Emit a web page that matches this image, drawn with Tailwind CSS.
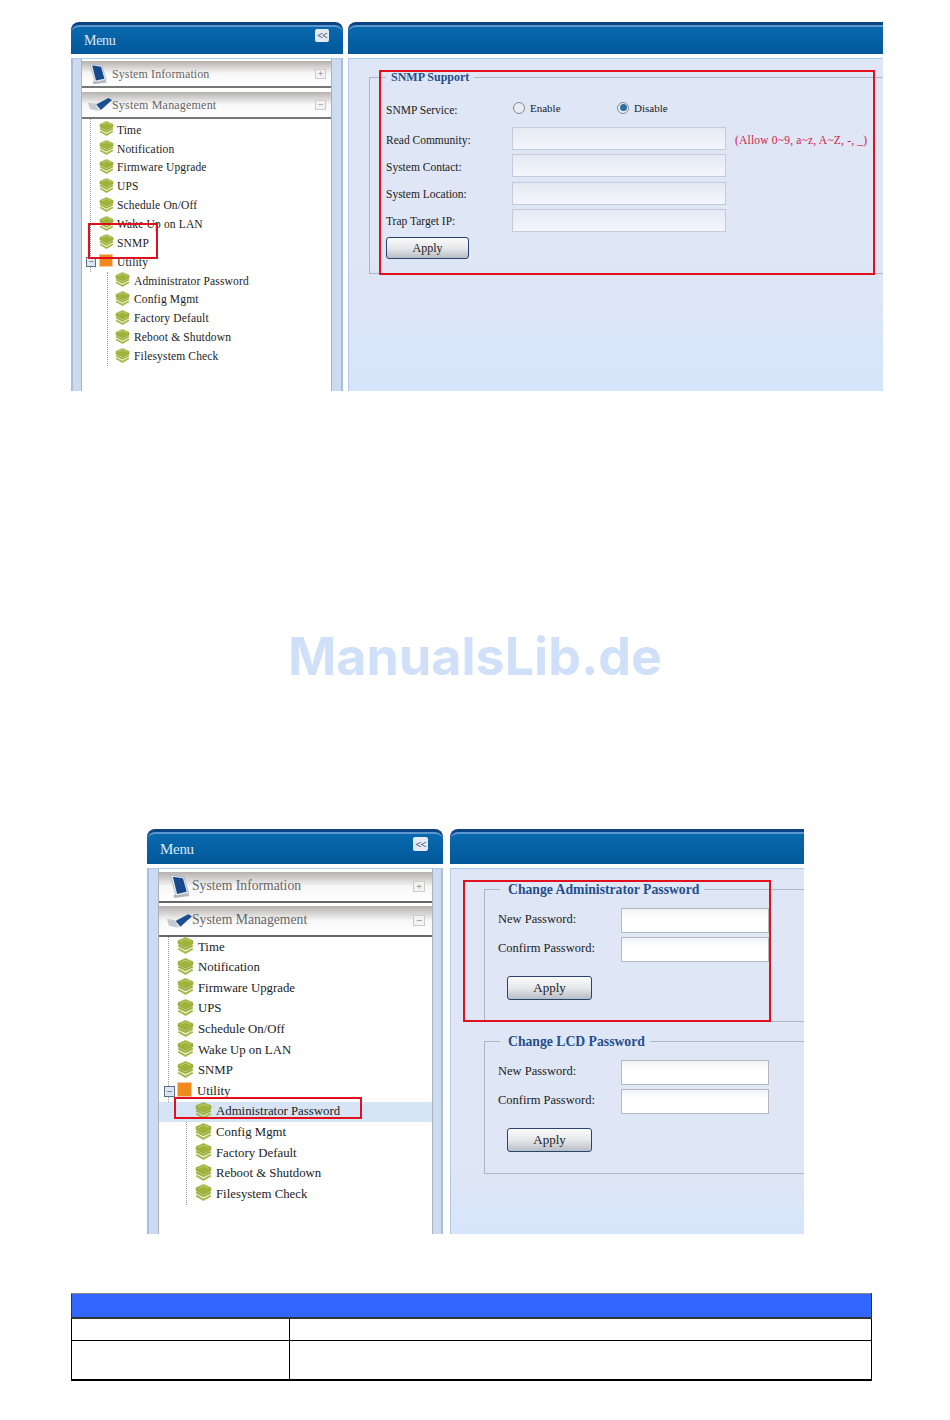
<!doctype html>
<html>
  <head>
    <meta charset="utf-8" />
    <title>SNMP and password settings</title>
    <script src="https://cdn.jsdelivr.net/npm/@tailwindcss/browser@4"></script>
  </head>
  <body class="bg-white font-['Liberation_Serif',serif] text-[#222]">
    <svg class="hidden">
      <symbol id="stack" viewBox="0 0 16 16">
        <path d="M8 .4 15 3.600v2.800L8 9.800 1 6.400V3.600z" fill="#9fb23a" stroke="#869c2c" stroke-width=".5" />
        <path d="M3 4.200 8 1.900l5 2.300" fill="none" stroke="#c3d06e" stroke-width=".9" />
        <path d="M1.200 8 8 11.500 14.800 8" fill="none" stroke="#9fb23a" stroke-width="1.900" />
        <path d="M1.200 11 8 14.800 14.800 11" fill="none" stroke="#a9ba4c" stroke-width="1.900" />
      </symbol>
      <symbol id="tablet" viewBox="0 0 24 26">
        <path d="M6 25 5 22 20 20 22 23z" fill="#b4b9bf" />
        <path d="M2 1 16 3 21 20 8 23z" fill="#e9edf2" stroke="#9aa3ad" stroke-width=".7" />
        <path d="M4.500 2.800 15 4.500 19 18.500 9 20.800z" fill="#17498c" />
      </symbol>
      <symbol id="drive" viewBox="0 0 26 16">
        <path d="M0 6 8 7 12 15 2 13z" fill="#c4cad1" />
        <path d="M8 7 13 5 16 11 12 15z" fill="#dfe3e7" />
        <path d="M9 8 22 1 26 3 14 14z" fill="#1c4f91" />
      </symbol>
    </svg>

    <!-- first screenshot: SNMP -->
    <section class="relative ml-[71px] flex h-[369px] w-[812px] gap-[5px] pt-[22px] box-content -mb-[22px]">
      <div class="flex h-[369px] w-[272px] flex-col">
        <div class="rounded-t-[8px] bg-[#0c4383] pt-[3px]">
          <div class="flex h-[29px] items-center justify-between rounded-t-[8px] border-t-2 border-[#5c98cf] bg-[linear-gradient(#0a69ae,#00589a)] pl-[13px] pr-[14px]">
            <span class="text-[14px] tracking-[-0.3px] text-[#dbeaf7]">Menu</span>
            <span class="mb-[10px] flex h-[13px] w-[14px] items-center justify-center rounded-[2px] bg-[#e4ebf2] text-[10px] font-bold leading-none tracking-[-1px] text-[#35506b]">&lt;&lt;</span>
          </div>
        </div>
        <div class="mt-[4px] flex-1 border-x-2 border-t border-x-[#a9bedb] border-t-[#a8cdf0] bg-[#cddbf1] pl-[8px] pr-[9px]">
          <div class="h-full border-x border-[#a7b2c2] bg-white pt-[2px]">
            <div class="flex h-[27px] items-center border-b-2 border-[#777] bg-[linear-gradient(#b5b1af,#f7f7f7_50%,#fff)]">
              <svg class="ml-[6px] h-[22px] w-[21px]"><use href="#tablet" /></svg>
              <span class="ml-[3px] text-[12px] tracking-[0.1px] text-[#666]">System Information</span>
              <span class="ml-auto mr-[5px] flex h-[10px] w-[11px] items-center justify-center border border-[#ccc] bg-[#f2f2f2] text-[10px] leading-none text-[#777]">+</span>
            </div>
            <div class="mt-[4px] flex h-[27px] items-center border-b-2 border-[#777] bg-[linear-gradient(#b5b1af,#f7f7f7_50%,#fff)]">
              <svg class="ml-[6px] h-[15px] w-[24px]"><use href="#drive" /></svg>
              <span class="text-[12px] tracking-[0.2px] text-[#666]">System Management</span>
              <span class="ml-auto mr-[5px] flex h-[10px] w-[11px] items-center justify-center border border-[#ccc] bg-[#f2f2f2] text-[10px] leading-none text-[#777]">−</span>
            </div>
            <div class="text-[11.500px] tracking-[0.15px]">
              <div class="ml-[8px] border-l border-dotted border-[#999] pt-[2px]">
                <div class="flex h-[18.850px] items-center gap-[3px] pl-[8px]"><svg class="mb-[3px] h-[15px] w-[15px]"><use href="#stack" /></svg>Time</div>
                <div class="flex h-[18.850px] items-center gap-[3px] pl-[8px]"><svg class="mb-[3px] h-[15px] w-[15px]"><use href="#stack" /></svg>Notification</div>
                <div class="flex h-[18.850px] items-center gap-[3px] pl-[8px]"><svg class="mb-[3px] h-[15px] w-[15px]"><use href="#stack" /></svg>Firmware Upgrade</div>
                <div class="flex h-[18.850px] items-center gap-[3px] pl-[8px]"><svg class="mb-[3px] h-[15px] w-[15px]"><use href="#stack" /></svg>UPS</div>
                <div class="flex h-[18.850px] items-center gap-[3px] pl-[8px]"><svg class="mb-[3px] h-[15px] w-[15px]"><use href="#stack" /></svg>Schedule On/Off</div>
                <div class="flex h-[18.850px] items-center gap-[3px] pl-[8px]"><svg class="mb-[3px] h-[15px] w-[15px]"><use href="#stack" /></svg>Wake Up on LAN</div>
                <div class="flex h-[18.850px] items-center gap-[3px] pl-[8px]"><svg class="mb-[3px] h-[15px] w-[15px]"><use href="#stack" /></svg>SNMP</div>
                <div class="relative flex h-[18.850px] items-center gap-[4px] pl-[8px]">
                  <span class="absolute left-[-5px] top-[4px] flex h-[10px] w-[10px] items-center justify-center border border-[#5a6f88] bg-[#dde6f0] text-[9px] leading-none">−</span>
                  <span class="mb-[3px] h-[13px] w-[14px] border border-[#f3c9a6] bg-[#f08a1d]"></span>Utility
                </div>
              </div>
              <div class="ml-[25px] border-l border-dotted border-[#999]">
                <div class="flex h-[18.850px] items-center gap-[4px] pl-[7px]"><svg class="mb-[3px] h-[15px] w-[15px]"><use href="#stack" /></svg>Administrator Password</div>
                <div class="flex h-[18.850px] items-center gap-[4px] pl-[7px]"><svg class="mb-[3px] h-[15px] w-[15px]"><use href="#stack" /></svg>Config Mgmt</div>
                <div class="flex h-[18.850px] items-center gap-[4px] pl-[7px]"><svg class="mb-[3px] h-[15px] w-[15px]"><use href="#stack" /></svg>Factory Default</div>
                <div class="flex h-[18.850px] items-center gap-[4px] pl-[7px]"><svg class="mb-[3px] h-[15px] w-[15px]"><use href="#stack" /></svg>Reboot &amp; Shutdown</div>
                <div class="flex h-[18.850px] items-center gap-[4px] pl-[7px]"><svg class="mb-[3px] h-[15px] w-[15px]"><use href="#stack" /></svg>Filesystem Check</div>
              </div>
            </div>
          </div>
        </div>
      </div>

      <div class="flex h-[369px] flex-1 flex-col overflow-hidden">
        <div class="rounded-tl-[8px] bg-[#0c4383] pt-[3px]">
          <div class="h-[29px] rounded-tl-[8px] border-t-2 border-[#5c98cf] bg-[linear-gradient(#0a69ae,#00589a)]"></div>
        </div>
        <div class="mt-[4px] flex-1 border-l border-t border-l-[#b4c8e4] border-t-[#a8cdf0] bg-[linear-gradient(#dfe6f5,#dfe6f5_60%,#d6e5fb)] pl-[20px] pt-[11px] text-[11.500px]">
          <fieldset class="border border-r-0 border-[#a9b7cc] pb-[14px] pl-[16px]">
            <legend class="pl-[5px] pr-[5px] text-[12px] font-bold leading-[14px] text-[#23508f]">SNMP Support</legend>
            <div class="mt-[12px] flex h-[27px] items-center">
              <span class="w-[126px] pt-[3px]">SNMP Service:</span>
              <span class="-mt-[4px] ml-[1px] h-[12px] w-[12px] rounded-full border border-[#888] bg-[#e8edf3]"></span>
              <span class="-mt-[2px] ml-[5px] w-[87px] text-[11px]">Enable</span>
              <span class="-mt-[4px] flex h-[12px] w-[12px] items-center justify-center rounded-full border border-[#7f8a98] bg-[#e8edf3]"><span class="h-[7px] w-[7px] rounded-full bg-[#2d6d9f]"></span></span>
              <span class="-mt-[2px] ml-[5px] text-[11px]">Disable</span>
            </div>
            <div class="mt-[4px] flex flex-col gap-[4.300px]">
              <div class="flex items-center"><label class="w-[126px] pt-[4px]">Read Community:</label><input class="h-[23px] w-[214px] border border-[#c3cbd8] bg-[linear-gradient(#e4eaf4,#f3f6fb)]" /><span class="ml-[9px] whitespace-nowrap pt-[4px] tracking-[0.2px] text-[#d3224a]">(Allow 0~9, a~z, A~Z, -, _)</span></div>
              <div class="flex items-center"><label class="w-[126px] pt-[4px]">System Contact:</label><input class="h-[23px] w-[214px] border border-[#c3cbd8] bg-[linear-gradient(#e4eaf4,#f3f6fb)]" /></div>
              <div class="flex items-center"><label class="w-[126px] pt-[4px]">System Location:</label><input class="h-[23px] w-[214px] border border-[#c3cbd8] bg-[linear-gradient(#e4eaf4,#f3f6fb)]" /></div>
              <div class="flex items-center"><label class="w-[126px] pt-[2px]">Trap Target IP:</label><input class="h-[23px] w-[214px] border border-[#c3cbd8] bg-[linear-gradient(#e4eaf4,#f3f6fb)]" /></div>
            </div>
            <button class="mt-[5px] block h-[22px] w-[83px] rounded-[3px] border border-[#27456b] bg-[linear-gradient(#fafafa,#e6e8ea_50%,#b9bec5)] text-[12px]">Apply</button>
          </fieldset>
        </div>
      </div>

      <div class="absolute left-[17px] top-[223px] h-[36px] w-[70px] border-2 border-[#e0101c]"></div>
      <div class="absolute left-[308px] top-[70px] h-[205px] w-[496px] border-2 border-[#e0101c]"></div>
    </section>

    <div class="mt-[258px] text-center font-['Inter',sans-serif] text-[52px] font-bold leading-[60px] text-[#cfe0f8]">ManualsLib.de</div>

    <!-- second screenshot: password -->
    <section class="relative ml-[147px] mt-[142px] flex h-[405px] w-[657px] gap-[7px]">
      <div class="flex w-[296px] flex-col">
        <div class="rounded-t-[8px] bg-[#0c4383] pt-[3px]">
          <div class="flex h-[32px] items-center justify-between rounded-t-[8px] border-t-2 border-[#5c98cf] bg-[linear-gradient(#0a69ae,#00589a)] pl-[13px] pr-[15px]">
            <span class="text-[15px] tracking-[-0.3px] text-[#dbeaf7]">Menu</span>
            <span class="mb-[10px] flex h-[14px] w-[15px] items-center justify-center rounded-[2px] bg-[#e4ebf2] text-[11px] font-bold leading-none tracking-[-1px] text-[#35506b]">&lt;&lt;</span>
          </div>
        </div>
        <div class="mt-[4px] flex-1 border-x-2 border-t border-x-[#a9bedb] border-t-[#a8cdf0] bg-[#cddbf1] pl-[9px] pr-[8px]">
          <div class="h-full border-x border-[#a7b2c2] bg-white pt-[3px]">
            <div class="flex h-[31px] items-center border-b-2 border-[#666] bg-[linear-gradient(#b5b1af,#f7f7f7_50%,#fff)]">
              <svg class="ml-[9px] h-[25px] w-[24px]"><use href="#tablet" /></svg>
              <span class="text-[13.700px] text-[#666]">System Information</span>
              <span class="ml-auto mr-[7px] flex h-[11px] w-[12px] items-center justify-center border border-[#ccc] bg-[#f2f2f2] text-[11px] leading-none text-[#777]">+</span>
            </div>
            <div class="mt-[3px] flex h-[31px] items-center border-b-2 border-[#666] bg-[linear-gradient(#b5b1af,#f7f7f7_50%,#fff)]">
              <svg class="ml-[8px] h-[16px] w-[25px]"><use href="#drive" /></svg>
              <span class="text-[13.700px] text-[#666]">System Management</span>
              <span class="ml-auto mr-[7px] flex h-[11px] w-[12px] items-center justify-center border border-[#ccc] bg-[#f2f2f2] text-[11px] leading-none text-[#777]">−</span>
            </div>
            <div class="text-[12.800px]">
              <div class="ml-[9px] border-l border-dotted border-[#999]">
                <div class="flex h-[20.600px] items-center gap-[4px] pl-[8px]"><svg class="mb-[3px] h-[17px] w-[17px]"><use href="#stack" /></svg>Time</div>
                <div class="flex h-[20.600px] items-center gap-[4px] pl-[8px]"><svg class="mb-[3px] h-[17px] w-[17px]"><use href="#stack" /></svg>Notification</div>
                <div class="flex h-[20.600px] items-center gap-[4px] pl-[8px]"><svg class="mb-[3px] h-[17px] w-[17px]"><use href="#stack" /></svg>Firmware Upgrade</div>
                <div class="flex h-[20.600px] items-center gap-[4px] pl-[8px]"><svg class="mb-[3px] h-[17px] w-[17px]"><use href="#stack" /></svg>UPS</div>
                <div class="flex h-[20.600px] items-center gap-[4px] pl-[8px]"><svg class="mb-[3px] h-[17px] w-[17px]"><use href="#stack" /></svg>Schedule On/Off</div>
                <div class="flex h-[20.600px] items-center gap-[4px] pl-[8px]"><svg class="mb-[3px] h-[17px] w-[17px]"><use href="#stack" /></svg>Wake Up on LAN</div>
                <div class="flex h-[20.600px] items-center gap-[4px] pl-[8px]"><svg class="mb-[3px] h-[17px] w-[17px]"><use href="#stack" /></svg>SNMP</div>
                <div class="relative flex h-[20.600px] items-center gap-[5px] pl-[8px]">
                  <span class="absolute left-[-5px] top-[5px] flex h-[11px] w-[11px] items-center justify-center border border-[#5a6f88] bg-[#dde6f0] text-[10px] leading-none">−</span>
                  <span class="mb-[3px] h-[15px] w-[15px] border border-[#f3c9a6] bg-[#f08a1d]"></span>Utility
                </div>
              </div>
              <div class="flex h-[20.600px] items-center gap-[4px] bg-[#d6e4f6] pl-[36px]"><svg class="mb-[3px] h-[17px] w-[17px]"><use href="#stack" /></svg>Administrator Password</div>
              <div class="ml-[27px] border-l border-dotted border-[#999]">
                <div class="flex h-[20.600px] items-center gap-[4px] pl-[8px]"><svg class="mb-[3px] h-[17px] w-[17px]"><use href="#stack" /></svg>Config Mgmt</div>
                <div class="flex h-[20.600px] items-center gap-[4px] pl-[8px]"><svg class="mb-[3px] h-[17px] w-[17px]"><use href="#stack" /></svg>Factory Default</div>
                <div class="flex h-[20.600px] items-center gap-[4px] pl-[8px]"><svg class="mb-[3px] h-[17px] w-[17px]"><use href="#stack" /></svg>Reboot &amp; Shutdown</div>
                <div class="flex h-[20.600px] items-center gap-[4px] pl-[8px]"><svg class="mb-[3px] h-[17px] w-[17px]"><use href="#stack" /></svg>Filesystem Check</div>
              </div>
            </div>
          </div>
        </div>
      </div>

      <div class="flex flex-1 flex-col overflow-hidden">
        <div class="rounded-tl-[8px] bg-[#0c4383] pt-[3px]">
          <div class="h-[32px] rounded-tl-[8px] border-t-2 border-[#5c98cf] bg-[linear-gradient(#0a69ae,#00589a)]"></div>
        </div>
        <div class="mt-[4px] flex-1 border-l border-t border-l-[#b4c8e4] border-t-[#a8cdf0] bg-[linear-gradient(#dfe6f5,#dfe6f5_82%,#d6e5fb)] pl-[33px] pt-[12px] text-[12.500px]">
          <fieldset class="border border-r-0 border-[#b0b8c4] pb-[21px] pl-[13px]">
            <legend class="ml-[2px] pl-[8px] pr-[5px] pt-[1px] text-[13.700px] font-bold leading-[15px] text-[#23508f]">Change Administrator Password</legend>
            <div class="mt-[11px] flex flex-col gap-[4px]">
              <div class="flex items-center"><label class="w-[123px] pb-[2px]">New Password:</label><input class="h-[25px] w-[148px] border border-[#b5b9bf] bg-[linear-gradient(#f0f2f5,#fff_40%)]" /></div>
              <div class="flex items-center"><label class="w-[123px] pb-[2px]">Confirm Password:</label><input class="h-[25px] w-[148px] border border-[#b5b9bf] bg-[linear-gradient(#f0f2f5,#fff_40%)]" /></div>
            </div>
            <button class="ml-[9px] mt-[14px] block h-[24px] w-[85px] rounded-[3px] border border-[#27456b] bg-[linear-gradient(#fafafa,#e6e8ea_50%,#b9bec5)] text-[13px]">Apply</button>
          </fieldset>
          <fieldset class="mt-[11px] border border-r-0 border-[#b0b8c4] pb-[21px] pl-[13px]">
            <legend class="ml-[2px] pl-[8px] pr-[5px] pt-[1px] text-[13.700px] font-bold leading-[15px] text-[#23508f]">Change LCD Password</legend>
            <div class="mt-[11px] flex flex-col gap-[4px]">
              <div class="flex items-center"><label class="w-[123px] pb-[2px]">New Password:</label><input class="h-[25px] w-[148px] border border-[#b5b9bf] bg-[linear-gradient(#f0f2f5,#fff_40%)]" /></div>
              <div class="flex items-center"><label class="w-[123px] pb-[2px]">Confirm Password:</label><input class="h-[25px] w-[148px] border border-[#b5b9bf] bg-[linear-gradient(#f0f2f5,#fff_40%)]" /></div>
            </div>
            <button class="ml-[9px] mt-[14px] block h-[24px] w-[85px] rounded-[3px] border border-[#27456b] bg-[linear-gradient(#fafafa,#e6e8ea_50%,#b9bec5)] text-[13px]">Apply</button>
          </fieldset>
        </div>
      </div>

      <div class="absolute left-[27px] top-[268px] h-[22px] w-[188px] border-2 border-[#e0101c]"></div>
      <div class="absolute left-[316px] top-[51px] h-[142px] w-[308px] border-2 border-[#e0101c]"></div>
    </section>

    <table class="ml-[71px] mt-[59px] w-[801px] table-fixed border-collapse">
      <colgroup>
        <col class="w-[218px]" />
        <col />
      </colgroup>
      <tbody>
        <tr class="h-[24px] bg-[#3366ff]">
          <td colspan="2" class="border border-b-2 border-[#333] border-t-[#888]"></td>
        </tr>
        <tr class="h-[23px]">
          <td class="border border-black"></td>
          <td class="border border-black"></td>
        </tr>
        <tr class="h-[39px]">
          <td class="border border-b-2 border-black"></td>
          <td class="border border-b-2 border-black"></td>
        </tr>
      </tbody>
    </table>
  </body>
</html>
